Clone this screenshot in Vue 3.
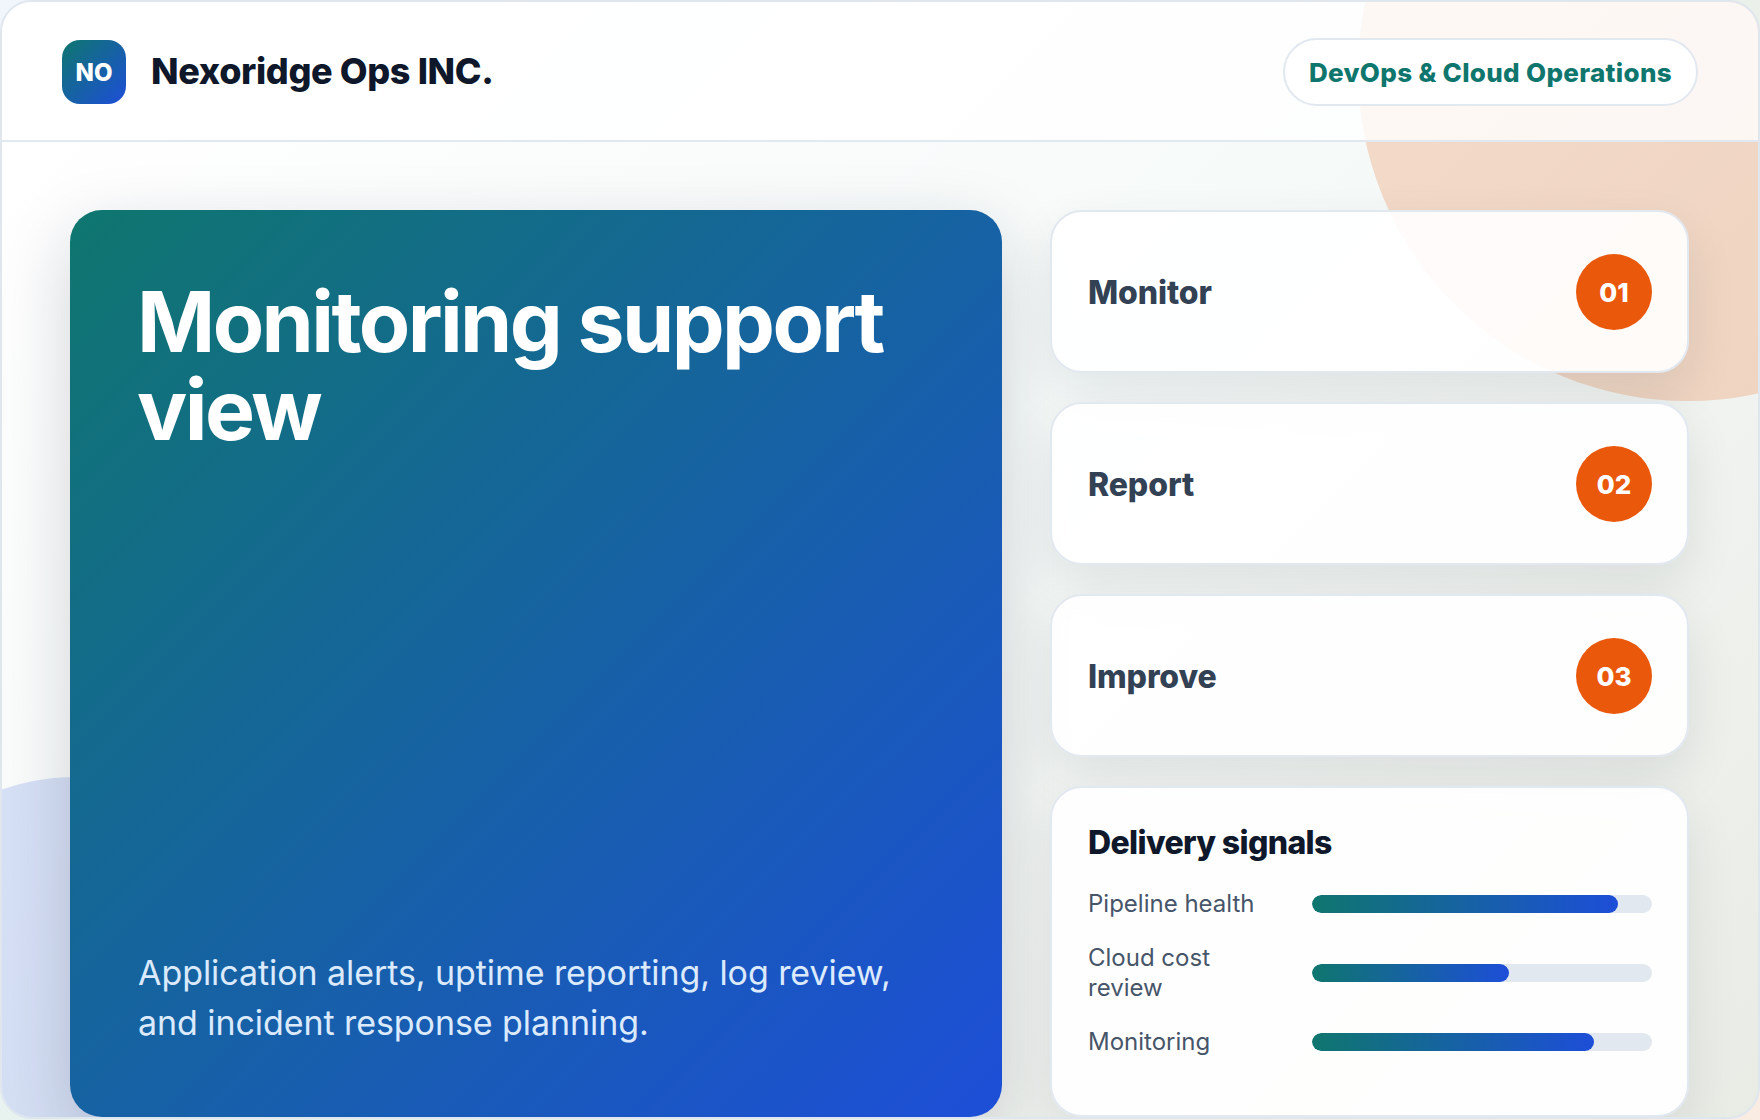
<script setup>
const steps = [
  { name: 'Monitor', num: '01' },
  { name: 'Report', num: '02' },
  { name: 'Improve', num: '03' },
]
const signals = [
  { label: 'Pipeline health', value: 90 },
  { label: 'Cloud cost review', value: 58 },
  { label: 'Monitoring', value: 83 },
]
</script>

<template>
  <div class="shell">
    <div class="blob blob-peach"></div>
    <div class="blob blob-blue"></div>
    <header class="top">
      <div class="brand">
        <div class="logo">NO</div>
        <div class="brand-name">Nexoridge Ops INC.</div>
      </div>
      <div class="pill">DevOps &amp; Cloud Operations</div>
    </header>
    <main class="main">
      <section class="hero">
        <h1>Monitoring support view</h1>
        <p>Application alerts, uptime reporting, log review, and incident response planning.</p>
      </section>
      <aside class="side">
        <div v-for="s in steps" :key="s.num" class="step">
          <span class="step-name">{{ s.name }}</span>
          <span class="step-num">{{ s.num }}</span>
        </div>
        <div class="signals">
          <h2>Delivery signals</h2>
          <div class="signal-list">
            <div v-for="g in signals" :key="g.label" class="signal">
              <span class="signal-label">{{ g.label }}</span>
              <div class="track"><div class="fill" :style="{ width: g.value + '%' }"></div></div>
            </div>
          </div>
        </div>
      </aside>
    </main>
  </div>
</template>

<style>
html, body {
  margin: 0;
  min-height: 1120px;
  background: linear-gradient(135deg, #f0f6fb 0%, #e6f1ec 50%, #f9ece3 100%);
}
</style>

<style scoped>
.shell {
  position: relative;
  box-sizing: border-box;
  width: 1760px;
  height: 1119px;
  overflow: hidden;
  border: 2px solid #dfe6ee;
  border-radius: 32px;
  background: linear-gradient(135deg, #ffffff 0%, #f6faf9 50%, #e9ece5 100%);
  font-family: Inter, "Liberation Sans", sans-serif;
}
.blob { position: absolute; border-radius: 50%; }
.blob-peach {
  left: 1356px; top: -261px; width: 660px; height: 660px;
  background: rgba(234, 88, 12, 0.2);
}
.blob-blue {
  left: -147px; top: 775px; width: 440px; height: 440px;
  background: rgba(29, 78, 216, 0.16);
}
.top {
  position: relative;
  box-sizing: border-box;
  height: 140px;
  padding: 2px 60px 0 60px;
  display: flex;
  align-items: center;
  justify-content: space-between;
  background: rgba(255, 255, 255, 0.8);
  border-bottom: 2px solid #e2e8f0;
}
.brand { display: flex; align-items: center; gap: 25px; }
.logo {
  width: 64px; height: 64px;
  border-radius: 18px;
  display: flex; align-items: center; justify-content: center;
  background: linear-gradient(135deg, #0f766e, #1d4ed8);
  color: #fff; font-weight: 800; font-size: 24px;
}
.brand-name { padding-bottom: 2px; font-size: 36px; font-weight: 800; color: #0f172a; letter-spacing: -0.36px; }
.pill {
  padding: 17.5px 24px;
  border: 2px solid #e2e8f0;
  border-radius: 999px;
  background: #fff;
  color: #0f766e;
  font-size: 26px;
  font-weight: 800;
  line-height: 29px;
  letter-spacing: 0.32px;
}
.main {
  position: relative;
  display: grid;
  grid-template-columns: 932px 639px;
  column-gap: 48px;
  padding: 68px 68px 0;
}
.hero {
  box-sizing: border-box;
  height: 907px;
  padding: 68px 68px 69px;
  border-radius: 32px;
  background: linear-gradient(135deg, #0f766e, #1d4ed8);
  color: #fff;
  display: flex;
  flex-direction: column;
  justify-content: space-between;
  box-shadow: 0 24px 70px rgba(15, 23, 42, 0.18);
}
.hero h1 { margin: 0 0 0 -1px; font-size: 84px; line-height: 88px; font-weight: 700; letter-spacing: -2.6px; }
.hero p { margin: 0; font-size: 34px; line-height: 50px; color: #dbeafe; letter-spacing: -0.07px; }
.side { display: flex; flex-direction: column; gap: 29px; height: 907px; }
.step, .signals {
  box-sizing: border-box;
  border: 2px solid #e2e8f0;
  border-radius: 32px;
  background: rgba(255, 255, 255, 0.9);
  box-shadow: 0 20px 50px rgba(15, 23, 42, 0.09);
}
.step {
  height: 163px;
  padding: 1px 35px 0 36px;
  display: flex;
  align-items: center;
  justify-content: space-between;
}
.step-name { font-size: 32px; font-weight: 800; color: #334155; letter-spacing: -0.1px; }
.step-num {
  width: 76px; height: 76px;
  border-radius: 50%;
  background: #ea580c;
  color: #fff;
  font-size: 26px; font-weight: 800;
  display: flex; align-items: center; justify-content: center;
}
.signals { flex: 1; padding: 33px 35px 0 36px; }
.signals h2 { margin: 0 0 24px; font-size: 32px; font-weight: 800; line-height: 44px; color: #0f172a; letter-spacing: -0.64px; }
.signal-list { display: flex; flex-direction: column; gap: 23px; }
.signal {
  display: grid;
  grid-template-columns: 1fr 340px;
  column-gap: 24px;
  align-items: center;
}
.signal-label { font-size: 24px; line-height: 30.5px; color: #475569; }
.track { height: 18px; border-radius: 999px; background: #e2e8f0; overflow: hidden; }
.fill { height: 100%; border-radius: 999px; background: linear-gradient(90deg, #0f766e, #1d4ed8); }
</style>
